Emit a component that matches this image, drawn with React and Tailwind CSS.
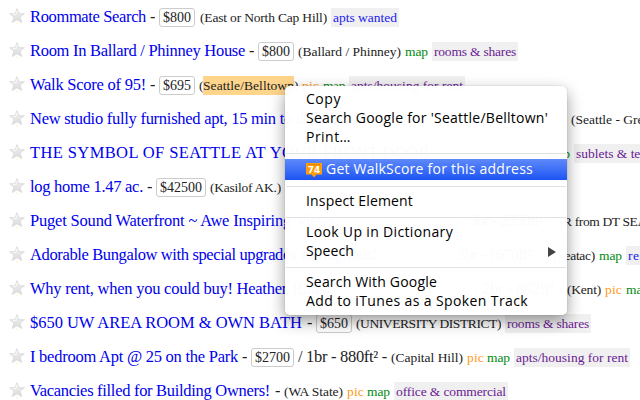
import { useLayoutEffect, useRef, useState } from "react";

// kind, text, left edge, right edge
const ROWS = [
  [["title", "Roommate Search", 30, 146], ["dash", "-", 150, 155], ["price", "$800", 159, 195], ["note", "(East or North Cap Hill)", 200, 327], ["tagNew", "apts wanted", 331, 399]],
  [["title", "Room In Ballard / Phinney House", 30, 245], ["dash", "-", 249, 254], ["price", "$800", 258, 294], ["note", "(Ballard / Phinney)", 298, 401], ["map", "map", 405, 428], ["tag", "rooms & shares", 432, 518]],
  [["title", "Walk Score of 95!", 30, 146], ["dash", "-", 150, 155], ["price", "$695", 159, 195], ["note", "(", 199, 203], ["mark", "Seattle/Belltown", 203, 294], ["note", ")", 294, 298], ["pic", "pic", 302, 319], ["map", "map", 323, 345], ["tag", "apts/housing for rent", 349, 465]],
  [["title", "New studio fully furnished apt, 15 min to", 30, 292], ["title", "downtown", 296, 362], ["note", "(Seattle - Greenlake)", 571, 683]],
  [["title", "THE SYMBOL OF SEATTLE AT YOUR", 30, 318], ["title", "FRONT DOOR", 323, 430], ["map", "map", 547, 570], ["tag", "sublets & temporary", 574, 688]],
  [["title", "log home 1.47 ac.", 30, 143], ["dash", "-", 147, 152], ["price", "$42500", 156, 206], ["note", "(Kasilof AK.)", 210, 281]],
  [["title", "Puget Sound Waterfront ~ Awe Inspiring", 30, 291], ["title", "Views", 296, 334], ["text", "/ 3br - 2350ft² -", 462, 551], ["note", "R from DT SEATTLE)", 563, 681]],
  [["title", "Adorable Bungalow with special upgrades", 30, 296], ["title", "throughout!", 301, 377], ["text", "/ 3br - 1670ft² -", 450, 539], ["note", "(Seatac)", 553, 595], ["map", "map", 599, 622], ["tagNew", "real estate", 626, 690]],
  [["title", "Why rent, when you could buy! Heather", 30, 287], ["title", "Ridge", 292, 330], ["text", "/ 2br - 892ft² -", 474, 563], ["note", "(Kent)", 567, 601], ["pic", "pic", 605, 622], ["map", "map", 626, 649]],
  [["title", "$650 UW AREA ROOM & OWN BATH", 30, 302], ["dash", "-", 307, 312], ["price", "$650", 316, 352], ["note", "(UNIVERSITY DISTRICT)", 356, 501], ["tag", "rooms & shares", 505, 591]],
  [["title", "I bedroom Apt @ 25 on the Park", 30, 238], ["dash", "-", 242, 247], ["price", "$2700", 251, 294], ["text", "/ 1br - 880ft² -", 298, 387], ["note", "(Capital Hill)", 391, 463], ["pic", "pic", 467, 484], ["map", "map", 487, 510], ["tag", "apts/housing for rent", 514, 630]],
  [["title", "Vacancies filled for Building Owners!", 30, 270], ["dash", "-", 275, 280], ["note", "(WA State)", 284, 343], ["pic", "pic", 347, 364], ["map", "map", 367, 390], ["tag", "office & commercial", 394, 508]],
];

const KIND = {
  title: "text-[16.5px] text-[#0000ee]",
  dash: "text-[16.5px] text-[#222]",
  text: "text-[16.5px] text-[#222]",
  note: "text-[13.5px] text-[#222]",
  mark: "bg-[#ffd58c] text-[13.5px] text-[#222]",
  pic: "text-[13.5px] text-[#ff9a1a]",
  map: "text-[13.5px] text-[#008a10]",
  tag: "bg-[#f0f0f0] text-[13.5px] text-[#6a1b93] px-0.5",
  tagNew: "bg-[#f0f0f0] text-[13.5px] text-[#2020ee] px-0.5",
  price: "rounded-[3px] border border-[#ccc] bg-white text-[14px] text-[#222] px-[3px]",
};

const INSET = { tag: 4, tagNew: 4, price: 8 };

// Spreads its text evenly over the given width.
function Fit({ width, children }) {
  const ref = useRef(null);
  const [spacing, setSpacing] = useState(0);
  useLayoutEffect(() => {
    const natural = ref.current.getBoundingClientRect().width;
    setSpacing((width - natural) / children.length);
  }, []);
  return (
    <span ref={ref} className="inline-block whitespace-pre" style={{ letterSpacing: spacing }}>
      {children}
    </span>
  );
}

function Star() {
  return (
    <svg viewBox="0 0 16 16" className="ml-[9px] mt-[8px] size-4 shrink-0">
      <defs>
        <linearGradient id="star" x1="0" y1="0" x2="0" y2="1">
          <stop offset="0" stopColor="#f3f3f3" />
          <stop offset="1" stopColor="#dadada" />
        </linearGradient>
      </defs>
      <path d="M8 .6 9.900 5.700h5.500l-4.300 3.500 1.700 5.400L8 11.700l-4.800 2.900 1.700-5.400L.6 5.700h5.500z" fill="url(#star)" stroke="#d8d8d8" strokeWidth=".8" />
      <path d="M8 2.800 6.800 6.600H3.500" fill="none" stroke="#fff" strokeWidth=".7" />
      <path d="M7.500 15.300h1.200" stroke="#ffe9a0" strokeWidth="1" />
    </svg>
  );
}

function Row({ items }) {
  let edge = 25;
  return (
    <div className="flex h-[34px] w-[760px] items-start">
      <Star />
      {items.map(([kind, text, from, to], i) => {
        const gap = from - edge;
        edge = to;
        const big = kind === "title" || kind === "dash" || kind === "text";
        return (
          <span
            key={i}
            className={`${KIND[kind]} ${big ? "mt-[7px] h-5 leading-5" : kind === "price" ? "mt-[8px] h-[19px] leading-[17px]" : "mt-[8px] h-[19px] leading-[19px]"} shrink-0 overflow-hidden whitespace-nowrap`}
            style={{ marginLeft: gap, width: to - from }}
          >
            <Fit width={to - from - (INSET[kind] || 0)}>{text}</Fit>
          </span>
        );
      })}
    </div>
  );
}

function Item({ children, width }) {
  return (
    <div className="flex h-[19px] items-center justify-between pl-[21px] pr-[11px] leading-[17px]">
      <span className="-mt-[2px]">
        <Fit width={width}>{children}</Fit>
      </span>
      {children === "Speech" && (
        <svg viewBox="0 0 8 10" className="h-2.5 w-2">
          <path d="M0 0 8 5 0 10z" fill="#444" />
        </svg>
      )}
    </div>
  );
}

function Separator() {
  return <div className="mx-px mt-[6px] mb-[5px] h-px bg-[#e2e2e4]" />;
}

function Menu() {
  return (
    <div className="absolute left-[285px] top-[86px] h-[229px] w-[282px] rounded-[5px] bg-white/[.98] pt-1 font-['Open_Sans','Noto_Sans',sans-serif] text-[14px] text-black shadow-[0_6px_16px_rgba(0,0,0,0.4),0_0_1px_rgba(0,0,0,0.4)]">
      <Item width={35}>Copy</Item>
      <Item width={242}>Search Google for 'Seattle/Belltown'</Item>
      <Item width={45}>Print…</Item>
      <Separator />
      <div className="flex h-[21px] items-center bg-linear-to-b from-[#5e88fb] to-[#1c53f2] pl-[21px] font-medium leading-[17px] text-white">
        <svg viewBox="0 0 16 16" className="mr-1 size-4">
          <path d="M0 1h16v11.500h-5.500L8 15.500l-2.500-3H0z" fill="#ff9d08" />
          <path d="M2 2.500h12" stroke="#d98000" strokeWidth="1" strokeDasharray="2 .5" />
          <text x="8" y="11.300" textAnchor="middle" fontFamily="DejaVu Sans" fontWeight="bold" fontSize="9" fill="#fff">74</text>
        </svg>
        <span className="-mt-[2px]">
          <Fit width={207}>Get WalkScore for this address</Fit>
        </span>
      </div>
      <Separator />
      <Item width={107}>Inspect Element</Item>
      <Separator />
      <Item width={147}>Look Up in Dictionary</Item>
      <Item width={48}>Speech</Item>
      <Separator />
      <Item width={131}>Search With Google</Item>
      <Item width={222}>Add to iTunes as a Spoken Track</Item>
    </div>
  );
}

export default function App() {
  return (
    <div className="relative h-[400px] w-[640px] overflow-hidden bg-white font-['Liberation_Serif',serif]">
      {ROWS.map((items, i) => (
        <Row key={i} items={items} />
      ))}
      <Menu />
    </div>
  );
}
